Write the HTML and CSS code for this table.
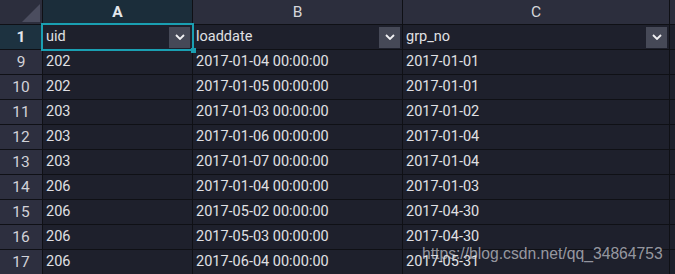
FILE: index.html
```html
<!DOCTYPE html>
<html>
<head>
<meta charset="utf-8">
<link rel="stylesheet" href="styles.css">
</head>
<body>
<div class="sheet">
  <div class="grid">
    <div class="corner"><span class="tri"></span></div>
    <div class="colhead sel">A</div>
    <div class="colhead">B</div>
    <div class="colhead">C</div>
    <div class="pad head"></div>

    <div class="rowhead sel">1</div>
    <div class="cell filter active">uid<span class="dd"><svg width="10" height="6" viewBox="0 0 10 6"><path d="M1 1 L5 5 L9 1" fill="none" stroke="#f2f2f4" stroke-width="1.8"/></svg></span><span class="handle"></span></div>
    <div class="cell filter">loaddate<span class="dd"><svg width="10" height="6" viewBox="0 0 10 6"><path d="M1 1 L5 5 L9 1" fill="none" stroke="#f2f2f4" stroke-width="1.8"/></svg></span></div>
    <div class="cell filter">grp_no<span class="dd"><svg width="10" height="6" viewBox="0 0 10 6"><path d="M1 1 L5 5 L9 1" fill="none" stroke="#f2f2f4" stroke-width="1.8"/></svg></span></div>
    <div class="pad"></div>

    <div class="rowhead">9</div><div class="cell">202</div><div class="cell">2017-01-04 00:00:00</div><div class="cell">2017-01-01</div><div class="pad"></div>
    <div class="rowhead">10</div><div class="cell">202</div><div class="cell">2017-01-05 00:00:00</div><div class="cell">2017-01-01</div><div class="pad"></div>
    <div class="rowhead">11</div><div class="cell">203</div><div class="cell">2017-01-03 00:00:00</div><div class="cell">2017-01-02</div><div class="pad"></div>
    <div class="rowhead">12</div><div class="cell">203</div><div class="cell">2017-01-06 00:00:00</div><div class="cell">2017-01-04</div><div class="pad"></div>
    <div class="rowhead">13</div><div class="cell">203</div><div class="cell">2017-01-07 00:00:00</div><div class="cell">2017-01-04</div><div class="pad"></div>
    <div class="rowhead">14</div><div class="cell">206</div><div class="cell">2017-01-04 00:00:00</div><div class="cell">2017-01-03</div><div class="pad"></div>
    <div class="rowhead">15</div><div class="cell">206</div><div class="cell">2017-05-02 00:00:00</div><div class="cell">2017-04-30</div><div class="pad"></div>
    <div class="rowhead">16</div><div class="cell">206</div><div class="cell">2017-05-03 00:00:00</div><div class="cell">2017-04-30</div><div class="pad"></div>
    <div class="rowhead">17</div><div class="cell">206</div><div class="cell">2017-06-04 00:00:00</div><div class="cell">2017-05-31</div><div class="pad"></div>
  </div>
  <div class="watermark">https://blog.csdn.net/qq_34864753</div>
</div>
</body>
</html>
```

FILE: styles.css
```css
html, body {
  margin: 0;
  padding: 0;
  background: #0f1015;
  overflow: hidden;
}
.sheet {
  position: relative;
  width: 675px;
  height: 274px;
  overflow: hidden;
}
.grid {
  display: grid;
  grid-template-columns: 42px 149px 209px 266px 6px;
  grid-auto-rows: 24px;
  column-gap: 1px;
  row-gap: 1px;
  font-family: Roboto, "Noto Sans", sans-serif;
  font-size: 14.5px;
  color: #e0e0e4;
}
.corner {
  background: #2c2e3d;
  position: relative;
}
.tri {
  position: absolute;
  right: 2px;
  bottom: 2px;
  width: 0;
  height: 0;
  border-style: solid;
  border-width: 0 0 18px 18px;
  border-color: transparent transparent #4b4d5f transparent;
}
.colhead {
  background: #2c2e3d;
  display: flex;
  align-items: center;
  justify-content: center;
  font-size: 15.5px;
  color: #d6d6da;
}
.colhead.sel {
  background: #1b2d3a;
  font-weight: bold;
  color: #e4e6ea;
}
.pad { background: #1e202c; }
.pad.head { background: #2c2e3d; }
.rowhead {
  background: #2d2f3f;
  display: flex;
  align-items: center;
  justify-content: center;
  font-size: 15.5px;
  color: #d2d2d8;
}
.rowhead.sel {
  background: #1d3240;
  font-weight: bold;
  color: #e4e6ea;
}
.cell {
  background: #1e202c;
  display: flex;
  align-items: center;
  padding-left: 3px;
  padding-bottom: 1px;
  white-space: nowrap;
  position: relative;
}
.cell.filter {
  justify-content: space-between;
  padding-right: 2px;
}
.dd {
  width: 21px;
  height: 21px;
  background: #464957;
  display: flex;
  align-items: center;
  justify-content: center;
  margin-top: 1px;
}
.cell.active {
  outline: 2px solid #1a9fb2;
  outline-offset: 0px;
  z-index: 2;
}
.handle {
  position: absolute;
  right: -4px;
  bottom: -4px;
  width: 5px;
  height: 5px;
  background: #1a9fb2;
}
.watermark {
  position: absolute;
  left: 422px;
  top: 245px;
  font-family: "Liberation Sans", Arial, sans-serif;
  font-size: 15.7px;
  color: rgba(220, 220, 225, 0.65);
  white-space: nowrap;
  z-index: 5;
}
```
